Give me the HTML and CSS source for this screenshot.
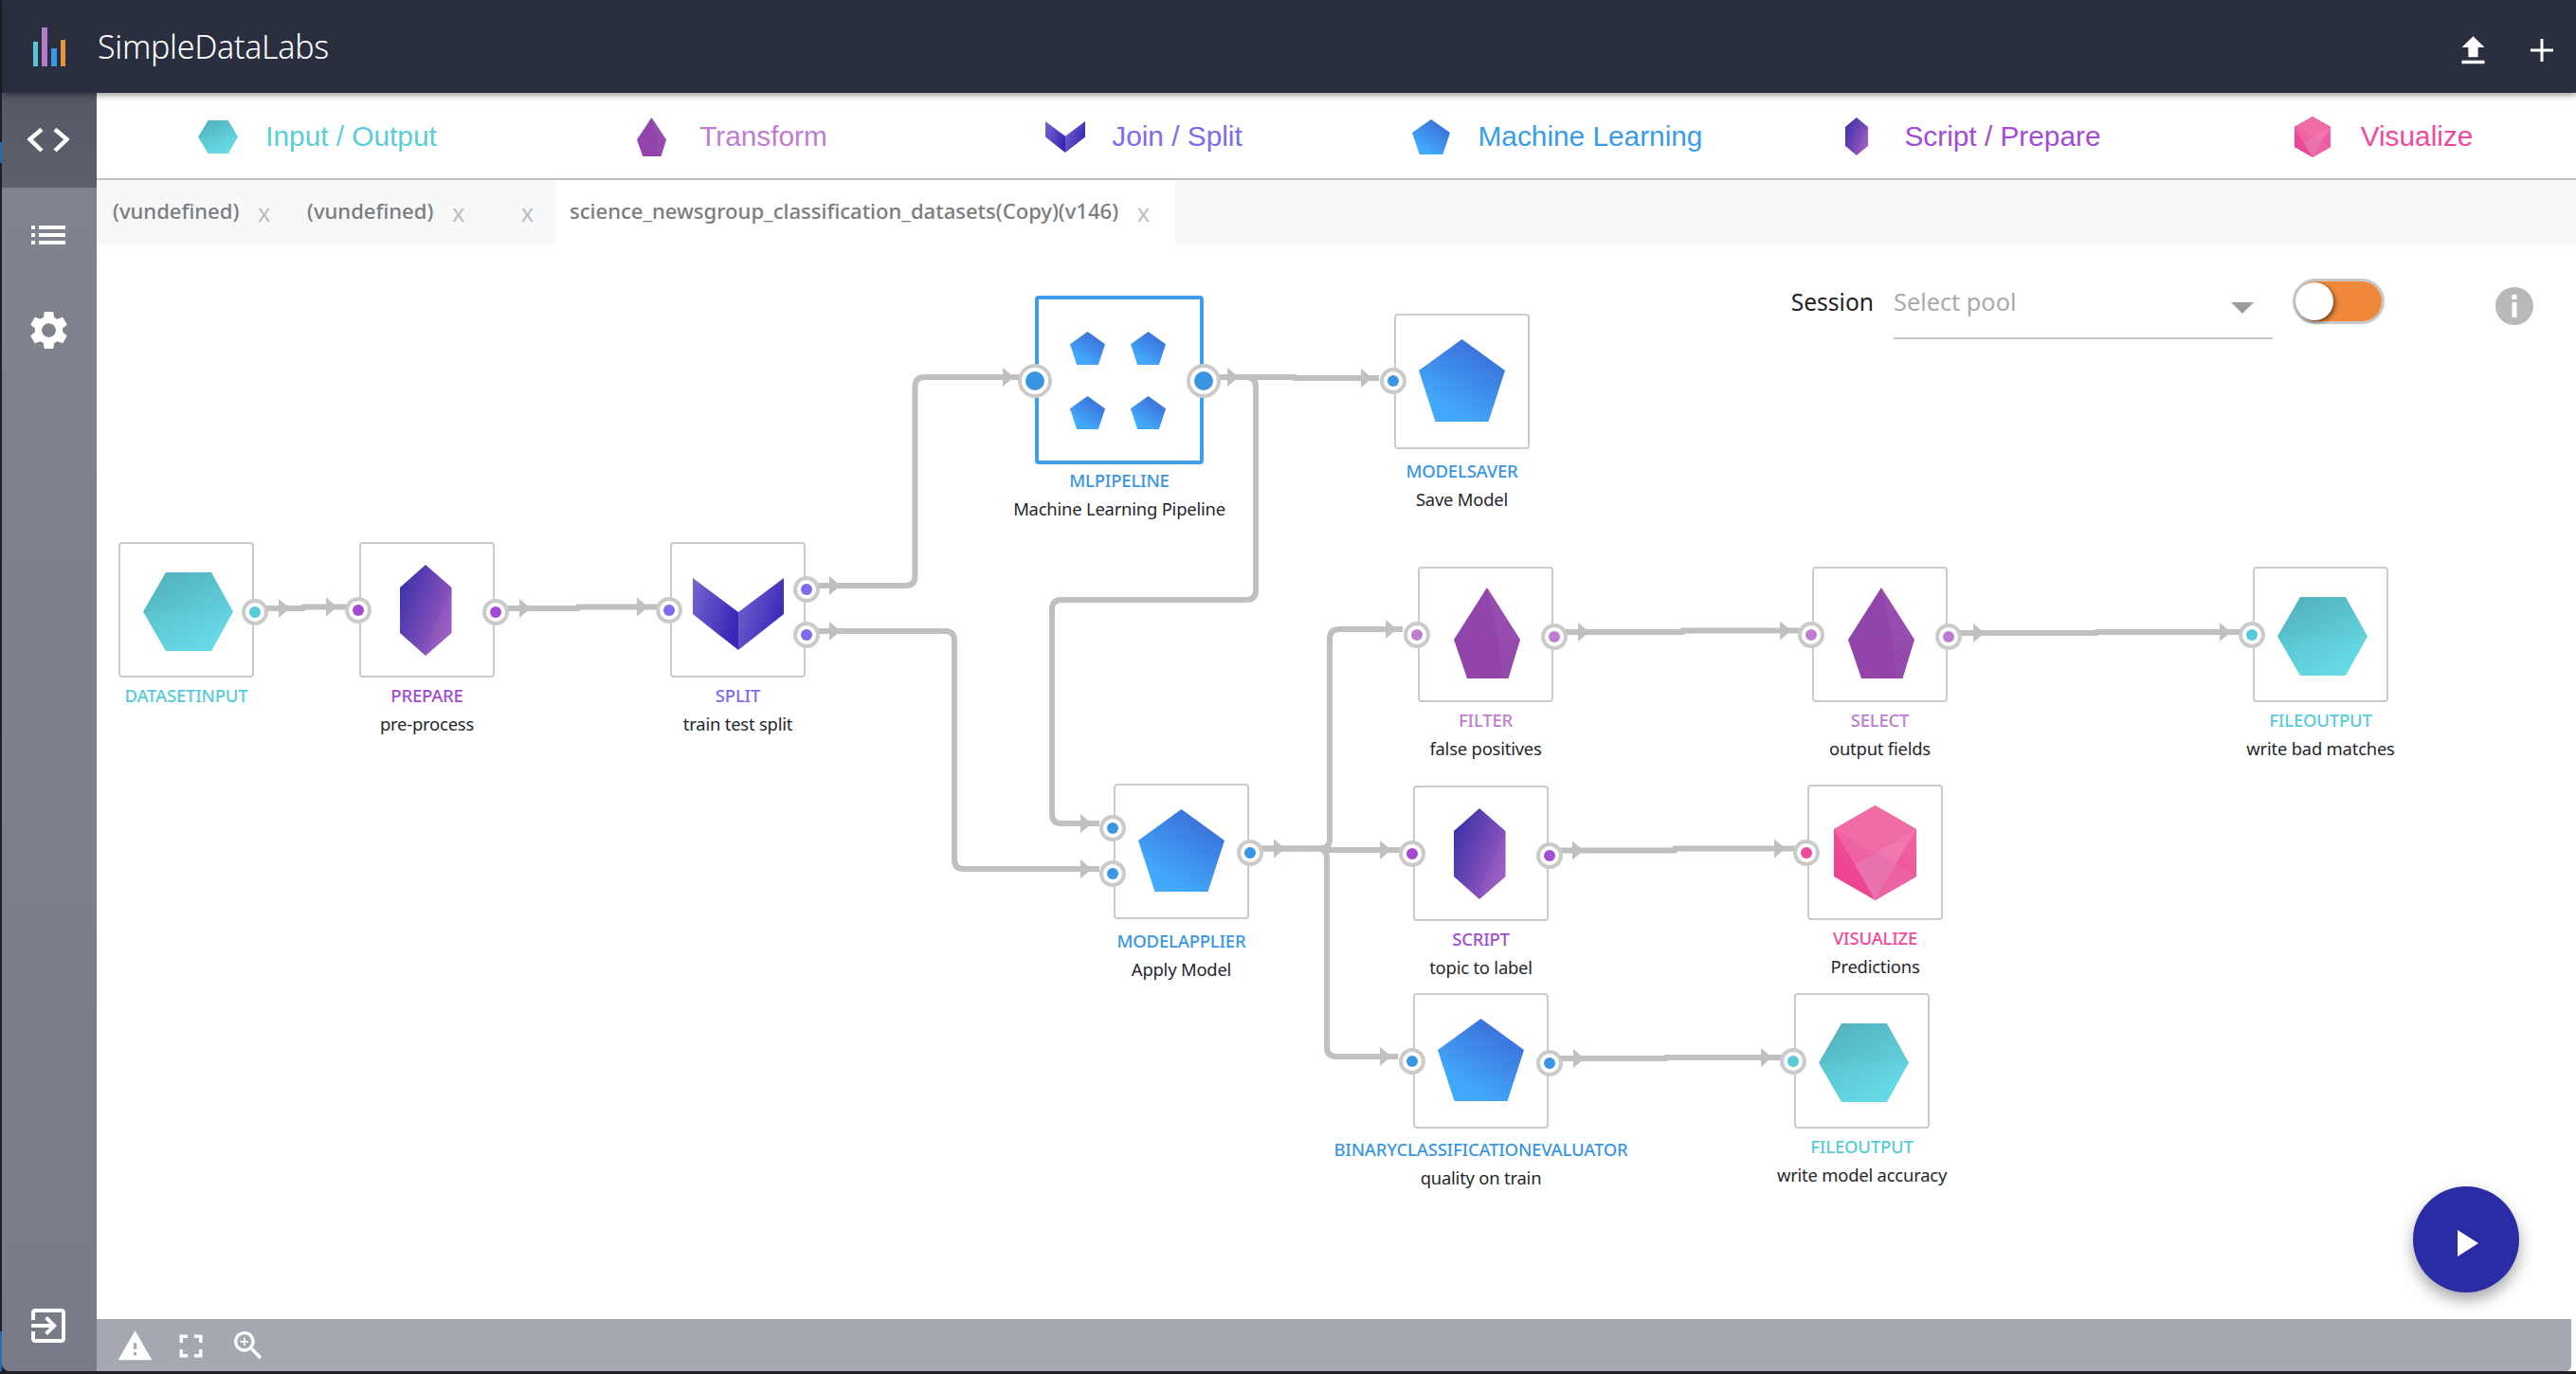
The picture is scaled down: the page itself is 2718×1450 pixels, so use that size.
FILE: index.html
```html
<!DOCTYPE html>
<html lang="en">
<head>
<meta charset="utf-8">
<title>SimpleDataLabs</title>
<link rel="stylesheet" href="styles.css">
</head>
<body>
<svg class="defs" aria-hidden="true">
  <defs>
    <linearGradient id="g-hex" x1="0.2" y1="0" x2="0.8" y2="1"><stop offset="0" stop-color="#53b2bc"/><stop offset="1" stop-color="#67dde9"/></linearGradient>
    <linearGradient id="g-crystal" x1="0" y1="0.15" x2="1" y2="0.85"><stop offset="0" stop-color="#3a2fa9"/><stop offset="1" stop-color="#a45fc2"/></linearGradient>
    <linearGradient id="g-kite" x1="0" y1="0" x2="1" y2="1"><stop offset="0" stop-color="#9145ab"/><stop offset="1" stop-color="#9243a9"/></linearGradient>
    <linearGradient id="g-wing" x1="0" y1="0" x2="1" y2="0.5"><stop offset="0" stop-color="#7865d2"/><stop offset="1" stop-color="#3829b6"/></linearGradient>
    <linearGradient id="g-pent" x1="0.85" y1="0.1" x2="0.35" y2="0.85"><stop offset="0" stop-color="#3a6cd6"/><stop offset="1" stop-color="#42a8fa"/></linearGradient>
    <linearGradient id="g-viz" x1="0" y1="1" x2="1" y2="0"><stop offset="0" stop-color="#ec3a8e"/><stop offset="1" stop-color="#f06ca6"/></linearGradient>
    <g id="s-hex">
      <polygon points="24,0 72,0 95,41.5 72,83 24,83 0,41.5" fill="url(#g-hex)"/>
      <polygon points="0,41.5 95,41.5 72,83 24,83" fill="#6fe6f0" opacity=".12"/>
    </g>
    <g id="s-crystal">
      <polygon points="27,0 54.5,24 54.5,72 27,96 0,72 0,24" fill="url(#g-crystal)"/>
      <polygon points="54.5,24 54.5,72 27,96 37,62" fill="#c585d8" opacity=".1"/>
    </g>
    <g id="s-kite">
      <polygon points="35,0 70,55 57.5,96 14,96 0,55" fill="url(#g-kite)"/>
      <polygon points="35,0 70,55 48,58" fill="#b478c6" opacity=".18"/>
      <polygon points="70,55 57.5,96 50,96 48,58" fill="#b478c6" opacity=".12"/>
    </g>
    <g id="s-vee">
      <polygon points="0,0 48,36 48,76 0,38" fill="url(#g-wing)"/>
      <polygon points="96,0 48,36 48,76 96,38" fill="url(#g-wing)"/>
    </g>
    <g id="s-pent">
      <polygon points="45.5,0 91,33 73.5,87 17.5,87 0,33" fill="url(#g-pent)"/>
    </g>
    <g id="s-viz">
      <polygon points="43.5,0 87,25 87,75 43.5,100 0,75 0,25" fill="url(#g-viz)"/>
      <polygon points="43.5,0 87,25 43.5,50 0,25" fill="#f06ca5"/>
      <polygon points="0,25 43.5,50 22,62" fill="#ef6ba7" opacity=".75"/>
      <polygon points="22,62 43.5,50 65,62 43.5,100" fill="#e872ad"/>
      <polygon points="87,25 43.5,50 65,62" fill="#f277ad"/>
      <polygon points="87,75 43.5,100 65,62" fill="#ec64a5"/>
    </g>
  </defs>
</svg>

<header class="topbar">
  <svg class="logo" viewBox="0 0 34 41"><rect x="0" y="15" width="5" height="26" fill="#56c7d3"/><rect x="9" y="0" width="6" height="41" fill="#b27ccb"/><rect x="19" y="22" width="6" height="19" fill="#3d97e4"/><rect x="29" y="13" width="5" height="28" fill="#e8943b"/></svg>
  <span class="brand">SimpleDataLabs</span>
  <span class="topbar-fill"></span>
  <svg class="ico-upload" viewBox="0 0 24 24"><path d="M9 16h6v-6h4l-7-7-7 7h4zm-4 2h14v2H5z"/></svg>
  <svg class="ico-plus" viewBox="0 0 24 24"><path d="M12 0v24M0 12h24"/></svg>
</header>

<div class="main">
  <aside class="sidebar">
    <div class="side-item side-active">
      <svg class="ico-code" viewBox="0 0 44 28"><path d="M15 2.500 2.500 13 15 25M29 2.500 41.500 13 29 25"/></svg>
    </div>
    <div class="side-item">
      <svg class="ico-list" viewBox="0 0 36 20"><path d="M0 0h4v4H0zM8 0h28v4H8zM0 8h4v4H0zM8 8h28v4H8zM0 16h4v4H0zM8 16h28v4H8z"/></svg>
    </div>
    <div class="side-item">
      <svg class="ico-gear" viewBox="0 0 24 24"><path d="M19.14 12.94c.04-.3.06-.61.06-.94 0-.32-.02-.64-.07-.94l2.03-1.58a.49.49 0 0 0 .12-.61l-1.92-3.32a.488.488 0 0 0-.59-.22l-2.39.96c-.5-.38-1.03-.7-1.62-.94l-.36-2.54a.484.484 0 0 0-.48-.41h-3.84c-.24 0-.43.17-.47.41l-.36 2.54c-.59.24-1.13.57-1.62.94l-2.39-.96c-.22-.08-.47 0-.59.22L2.740 8.870c-.12.21-.08.47.12.61l2.030 1.580c-.05.3-.09.63-.09.94s.02.64.07.94l-2.030 1.580a.49.49 0 0 0-.12.61l1.920 3.320c.12.22.37.29.59.22l2.390-.96c.5.38 1.030.7 1.620.94l.36 2.540c.05.24.24.41.48.41h3.840c.24 0 .44-.17.47-.41l.36-2.540c.59-.24 1.130-.56 1.620-.94l2.390.96c.22.08.47 0 .59-.22l1.920-3.320c.12-.22.07-.47-.12-.61l-2.010-1.580zM12 15.600c-1.980 0-3.600-1.620-3.600-3.600s1.620-3.600 3.600-3.600 3.600 1.620 3.600 3.600-1.620 3.600-3.600 3.600z"/></svg>
    </div>
    <div class="side-fill"></div>
    <div class="side-exit">
      <svg class="ico-exit" viewBox="0 0 24 24"><path d="M10.090 15.590 11.500 17l5-5-5-5-1.410 1.410L12.670 11H3v2h9.670l-2.580 2.590zM19 3H5c-1.110 0-2 .9-2 2v4h2V5h14v14H5v-4H3v4c0 1.100.89 2 2 2h14c1.100 0 2-.9 2-2V5c0-1.100-.9-2-2-2z"/></svg>
    </div>
  </aside>

  <div class="content">
    <nav class="palette">
      <div class="pal pal-io"><svg class="pi pi-hex" viewBox="0 0 95 83" preserveAspectRatio="none"><use href="#s-hex"/></svg><span>Input / Output</span></div>
      <div class="pal pal-tr"><svg class="pi pi-kite" viewBox="0 0 70 96" preserveAspectRatio="none"><use href="#s-kite"/></svg><span>Transform</span></div>
      <div class="pal pal-js"><svg class="pi pi-vee" viewBox="0 0 96 76" preserveAspectRatio="none"><use href="#s-vee"/></svg><span>Join / Split</span></div>
      <div class="pal pal-ml"><svg class="pi pi-pent" viewBox="0 0 91 87" preserveAspectRatio="none"><use href="#s-pent"/></svg><span>Machine Learning</span></div>
      <div class="pal pal-sp"><svg class="pi pi-crystal" viewBox="0 0 54.500 96" preserveAspectRatio="none"><use href="#s-crystal"/></svg><span>Script / Prepare</span></div>
      <div class="pal pal-vz"><svg class="pi pi-viz" viewBox="0 0 87 100" preserveAspectRatio="none"><use href="#s-viz"/></svg><span>Visualize</span></div>
    </nav>

    <div class="tabs">
      <div class="tab tab-a"><span class="tab-name">(vundefined)</span><span class="tab-x">x</span></div>
      <div class="tab tab-b"><span class="tab-name">(vundefined)</span><span class="tab-x">x</span></div>
      <div class="tab tab-c"><span class="tab-x">x</span></div>
      <div class="tab tab-active"><span class="tab-name">science_newsgroup_classification_datasets(Copy)(v146)</span><span class="tab-x">x</span></div>
    </div>

    <main class="canvas">
      <svg class="edges" viewBox="102 258 2611 1134">
        <g class="lines">
          <path d="M270 642H320V640.500H375"/>
          <path d="M524 642H610V640.500H695"/>
          <path d="M850 618H955.500Q965.500 618 965.500 608V408Q965.500 398 975.500 398H1075"/>
          <path d="M850 666H997Q1007 666 1007 676V907Q1007 917 1017 917H1160"/>
          <path d="M1270 398H1366V399H1455"/>
          <path d="M1270 398H1315Q1325 398 1325 408V623Q1325 633 1315 633H1120Q1110 633 1110 643V859Q1110 869 1120 869H1160"/>
          <path d="M1318 895.500H1393Q1403 895.500 1403 885.500V674Q1403 664 1413 664H1480"/>
          <path d="M1318 895.500H1400V897H1480"/>
          <path d="M1390 895.500Q1400 895.500 1400 905.500V1105Q1400 1115 1410 1115H1475"/>
          <path d="M1640 667H1775V665.500H1900"/>
          <path d="M2056 668H2212V667H2365"/>
          <path d="M1634 897.500H1767V895.500H1895"/>
          <path d="M1634 1117H1758V1116H1880"/>
        </g>
        <g class="arrows">
          <polygon points="294,632 306,642 294,652"/>
          <polygon points="344,630.500 356,640.500 344,650.500"/>
          <polygon points="548,632 560,642 548,652"/>
          <polygon points="672,630.500 684,640.500 672,650.500"/>
          <polygon points="875,608 887,618 875,628"/>
          <polygon points="1058,388 1070,398 1058,408"/>
          <polygon points="875,656 887,666 875,676"/>
          <polygon points="1140,907 1152,917 1140,927"/>
          <polygon points="1295,388 1307,398 1295,408"/>
          <polygon points="1436,389 1448,399 1436,409"/>
          <polygon points="1140,859 1152,869 1140,879"/>
          <polygon points="1344,885.500 1356,895.500 1344,905.500"/>
          <polygon points="1462,654 1474,664 1462,674"/>
          <polygon points="1456,887 1468,897 1456,907"/>
          <polygon points="1456,1105 1468,1115 1456,1125"/>
          <polygon points="1665,657 1677,667 1665,677"/>
          <polygon points="1878,655.500 1890,665.500 1878,675.500"/>
          <polygon points="2082,658 2094,668 2082,678"/>
          <polygon points="2342,657 2354,667 2342,677"/>
          <polygon points="1659,887.500 1671,897.500 1659,907.500"/>
          <polygon points="1872,885.500 1884,895.500 1872,905.500"/>
          <polygon points="1660,1107 1672,1117 1660,1127"/>
          <polygon points="1858,1106 1870,1116 1858,1126"/>
        </g>
      </svg>

      <div class="node k-io n-dataset">
        <div class="box"><svg class="shape sh-hex" viewBox="0 0 95 83"><use href="#s-hex"/></svg><span class="port p-out"></span></div>
        <div class="cap cap-21"><div class="cap-t">DATASETINPUT</div></div>
      </div>
      <div class="node k-sp n-prepare">
        <div class="box"><svg class="shape sh-crystal" viewBox="0 0 54.500 96"><use href="#s-crystal"/></svg><span class="port p-in"></span><span class="port p-out"></span></div>
        <div class="cap cap-21"><div class="cap-t">PREPARE</div><div class="cap-d">pre-process</div></div>
      </div>
      <div class="node k-js n-split">
        <div class="box"><svg class="shape sh-vee" viewBox="0 0 96 76"><use href="#s-vee"/></svg><span class="port p-in"></span><span class="port p-out p-split1"></span><span class="port p-out p-split2"></span></div>
        <div class="cap cap-21"><div class="cap-t">SPLIT</div><div class="cap-d">train test split</div></div>
      </div>
      <div class="node k-ml n-ml">
        <div class="box box-sel">
          <div class="mini-grid">
            <svg class="mini" viewBox="0 0 91 87" preserveAspectRatio="none"><use href="#s-pent"/></svg>
            <svg class="mini" viewBox="0 0 91 87" preserveAspectRatio="none"><use href="#s-pent"/></svg>
            <svg class="mini" viewBox="0 0 91 87" preserveAspectRatio="none"><use href="#s-pent"/></svg>
            <svg class="mini" viewBox="0 0 91 87" preserveAspectRatio="none"><use href="#s-pent"/></svg>
          </div>
          <span class="port port-lg p-lg-in"></span><span class="port port-lg p-lg-out"></span>
        </div>
        <div class="cap cap-17"><div class="cap-t">MLPIPELINE</div><div class="cap-d">Machine Learning Pipeline</div></div>
      </div>
      <div class="node k-ml n-saver">
        <div class="box"><svg class="shape sh-pent" viewBox="0 0 91 87"><use href="#s-pent"/></svg><span class="port p-in p-saver"></span></div>
        <div class="cap cap-25"><div class="cap-t">MODELSAVER</div><div class="cap-d">Save Model</div></div>
      </div>
      <div class="node k-ml n-applier">
        <div class="box"><svg class="shape sh-pent" viewBox="0 0 91 87"><use href="#s-pent"/></svg><span class="port p-in p-app1"></span><span class="port p-in p-app2"></span><span class="port p-out p-app3"></span></div>
        <div class="cap cap-25"><div class="cap-t">MODELAPPLIER</div><div class="cap-d">Apply Model</div></div>
      </div>
      <div class="node k-tr n-filter">
        <div class="box"><svg class="shape sh-kite" viewBox="0 0 70 96"><use href="#s-kite"/></svg><span class="port p-in"></span><span class="port p-out"></span></div>
        <div class="cap cap-21"><div class="cap-t">FILTER</div><div class="cap-d">false positives</div></div>
      </div>
      <div class="node k-tr n-select">
        <div class="box"><svg class="shape sh-kite" viewBox="0 0 70 96"><use href="#s-kite"/></svg><span class="port p-in"></span><span class="port p-out"></span></div>
        <div class="cap cap-21"><div class="cap-t">SELECT</div><div class="cap-d">output fields</div></div>
      </div>
      <div class="node k-io n-out1">
        <div class="box"><svg class="shape sh-hex" viewBox="0 0 95 83"><use href="#s-hex"/></svg><span class="port p-in"></span></div>
        <div class="cap cap-21"><div class="cap-t">FILEOUTPUT</div><div class="cap-d">write bad matches</div></div>
      </div>
      <div class="node k-sp n-script">
        <div class="box"><svg class="shape sh-crystal" viewBox="0 0 54.500 96"><use href="#s-crystal"/></svg><span class="port p-in"></span><span class="port p-out"></span></div>
        <div class="cap cap-21"><div class="cap-t">SCRIPT</div><div class="cap-d">topic to label</div></div>
      </div>
      <div class="node k-vz n-viz">
        <div class="box"><svg class="shape sh-viz" viewBox="0 0 87 100"><use href="#s-viz"/></svg><span class="port p-in"></span></div>
        <div class="cap cap-21"><div class="cap-t">VISUALIZE</div><div class="cap-d">Predictions</div></div>
      </div>
      <div class="node k-ml n-binary">
        <div class="box"><svg class="shape sh-pent" viewBox="0 0 91 87"><use href="#s-pent"/></svg><span class="port p-in"></span><span class="port p-out"></span></div>
        <div class="cap cap-24"><div class="cap-t">BINARYCLASSIFICATIONEVALUATOR</div><div class="cap-d">quality on train</div></div>
      </div>
      <div class="node k-io n-out2">
        <div class="box"><svg class="shape sh-hex" viewBox="0 0 95 83"><use href="#s-hex"/></svg><span class="port p-in"></span></div>
        <div class="cap cap-21"><div class="cap-t">FILEOUTPUT</div><div class="cap-d">write model accuracy</div></div>
      </div>

      <div class="session">
        <span class="session-label">Session</span>
        <div class="select"><span>Select pool</span><i class="caret"></i></div>
        <div class="toggle"><i class="knob"></i></div>
        <svg class="info" viewBox="0 0 40 40"><circle cx="20" cy="20" r="20" fill="#b9b9b9"/><rect x="17.500" y="8" width="5" height="5" fill="#fff"/><rect x="17.500" y="16" width="5" height="16" fill="#fff"/></svg>
      </div>

      <button class="run" type="button" aria-label="Run"><svg viewBox="0 0 22 28"><polygon points="0,0 22,14 0,28"/></svg></button>
    </main>

    <footer class="status">
      <svg class="st-warn" viewBox="0 0 24 24"><path fill-rule="evenodd" d="M1 21h22L12 2 1 21zm12-3h-2v-2h2v2zm0-4h-2v-4h2v4z"/></svg>
      <svg class="st-full" viewBox="0 0 24 24"><path d="M7 14H5v5h5v-2H7v-3zm-2-4h2V7h3V5H5v5zm12 7h-3v2h5v-5h-2v3zM14 5v2h3v3h2V5h-5z"/></svg>
      <svg class="st-zoom" viewBox="0 0 24 24"><path d="M15.500 14h-.79l-.28-.27C15.410 12.590 16 11.110 16 9.500 16 5.910 13.090 3 9.500 3S3 5.910 3 9.500 5.910 16 9.500 16c1.610 0 3.090-.59 4.230-1.570l.27.28v.79l5 4.990L20.490 19l-4.990-5zm-6 0C7.010 14 5 11.990 5 9.500S7.010 5 9.500 5 14 7.010 14 9.500 11.990 14 9.500 14z"/><path d="M12 10h-2v2H9v-2H7V9h2V7h1v2h2v1z"/></svg>
    </footer>
  </div>
</div>
<span class="edge-mark edge-mark-a"></span>
<span class="edge-mark edge-mark-b"></span>
</body>
</html>
```

FILE: styles.css
```css
* { box-sizing: border-box; }
html, body { margin: 0; padding: 0; }
body {
  width: 2718px;
  height: 1450px;
  overflow: hidden;
  background: #1e2025;
  font-family: "Noto Sans", "Open Sans", sans-serif;
  position: relative;
}
.defs { position: absolute; width: 0; height: 0; }

/* top bar */
.topbar {
  height: 98px;
  display: flex;
  align-items: center;
  background: #2a2f40;
  margin-left: 2px;
  padding-left: 33px;
  position: relative;
  z-index: 3;
  box-shadow: 0 2px 7px rgba(0, 0, 0, .45);
}
.logo { width: 34px; height: 41px; }
.brand { margin-left: 34px; color: #fff; font-size: 34px; font-weight: 300; letter-spacing: -.3px; }
.topbar-fill { flex: 1; }
.ico-upload { width: 41px; height: 41px; fill: #fff; margin-right: 40px; margin-top: 8px; }
.ico-plus { width: 24px; height: 24px; stroke: #fff; stroke-width: 3; fill: none; margin-right: 24px; margin-top: 8px; }

/* layout */
.main { display: flex; height: 1349px; }
.sidebar {
  width: 100px;
  flex: none;
  margin-left: 2px;
  display: flex;
  flex-direction: column;
  background: linear-gradient(180deg, #81848f 0%, #797c88 100%);
  border-bottom-left-radius: 8px;
}
.side-item { height: 100px; display: flex; align-items: center; justify-content: center; padding-right: 2px; }
.side-active { background: linear-gradient(180deg, #565965, #5c5f6c); }
.ico-code { width: 44px; height: 28px; stroke: #fff; stroke-width: 4.500; fill: none; }
.ico-list { width: 36px; height: 20px; fill: #fff; }
.ico-gear { width: 49px; height: 49px; fill: #fff; }
.side-fill { flex: 1; }
.side-exit { display: flex; justify-content: center; padding-bottom: 24px; padding-right: 2px; }
.ico-exit { width: 48px; height: 48px; fill: #fff; }

.content {
  flex: 1;
  min-width: 0;
  display: flex;
  flex-direction: column;
  background: #fff;
  position: relative;
}

/* palette */
.palette {
  height: 92px;
  flex: none;
  display: grid;
  grid-template-columns: repeat(6, 436px);
  padding: 2px 0 0 15px;
  align-items: center;
  overflow: hidden;
  border-bottom: 2px solid #c0c0c0;
  font-family: "Liberation Sans", Arial, sans-serif;
  font-size: 29.800px;
}
.pal { display: flex; align-items: center; justify-content: center; }
.pal-io { color: #5ccdd8; gap: 29px; }
.pal-tr { color: #bd7ed0; gap: 35px; padding-left: 3px; }
.pal-js { color: #7c6bed; gap: 28px; }
.pal-ml { color: #3a9be8; gap: 30px; }
.pal-sp { color: #a24dd1; gap: 38px; padding-left: 6px; }
.pal-vz { color: #ef4a9c; gap: 32px; }
.pi { display: block; flex: none; }
.pi-hex { width: 42px; height: 35px; }
.pi-kite { width: 31px; height: 41px; }
.pi-vee { width: 42px; height: 33px; }
.pi-pent { width: 40px; height: 37px; }
.pi-crystal { width: 24px; height: 40px; }
.pi-viz { width: 38px; height: 43px; }

/* tabs */
.tabs {
  height: 68px;
  flex: none;
  display: flex;
  background: #f7f8fa;
  font-size: 22.050px;
  color: #7c7c7c;
}
.tab { display: flex; align-items: center; height: 100%; }
.tab-a { padding-left: 17px; width: 222px; }
.tab-b { width: 197px; }
.tab-c { width: 65px; justify-content: flex-end; padding-right: 23px; }
.tab-active { width: 654px; background: #fff; padding-left: 15px; }
.tab-name { white-space: nowrap; font-weight: 500; padding-bottom: 5px; }
.tab-x { font-family: "Liberation Sans", Arial, sans-serif; font-size: 26px; color: #bdbdbd; margin-left: 20px; padding-top: 3px; }
.tab-c .tab-x { margin-left: 0; }

/* canvas */
.canvas { flex: 1; position: relative; background: #fff; overflow: hidden; }
.edges { position: absolute; left: 0; top: 0; width: 2611px; height: 1134px; }
.lines path { fill: none; stroke: #c0c0c0; stroke-width: 6px; stroke-linejoin: round; }
.arrows polygon { fill: #c0c0c0; }

.node {
  position: absolute;
  width: 143px;
  display: flex;
  flex-direction: column;
  align-items: center;
  --c: #3a9be8;
}
.k-io { --c: #57cbd7; }
.k-tr { --c: #bd7ed0; }
.k-js { --c: #7c6bed; }
.k-ml { --c: #3a96e2; }
.k-sp { --c: #a24dd1; }
.k-vz { --c: #ef4a9c; }

.n-dataset { left: 23px; top: 314px; }
.n-prepare { left: 277px; top: 314px; }
.n-split { left: 605px; top: 314px; }
.n-ml { left: 990px; top: 54px; width: 178px; }
.n-saver { left: 1369px; top: 73px; }
.n-applier { left: 1073px; top: 569px; }
.n-filter { left: 1394px; top: 340px; }
.n-select { left: 1810px; top: 340px; }
.n-out1 { left: 2275px; top: 340px; }
.n-script { left: 1389px; top: 571px; }
.n-viz { left: 1805px; top: 570px; }
.n-binary { left: 1389px; top: 790px; }
.n-out2 { left: 1791px; top: 790px; }

.box {
  position: relative;
  flex: none;
  width: 143px;
  height: 143px;
  background: #fff;
  border: 2px solid #cbcbcb;
  border-radius: 4px;
}
.box-sel { width: 178px; height: 178px; border: 4px solid #3f9eec; }
.shape { position: absolute; display: block; }
.sh-hex { width: 95px; height: 83px; left: 24px; top: 30px; }
.sh-crystal { width: 54.500px; height: 96px; left: 41px; top: 22px; }
.sh-vee { width: 96px; height: 76px; left: 22px; top: 36px; }
.sh-pent { width: 91px; height: 87px; left: 24px; top: 25px; }
.sh-kite { width: 70px; height: 96px; left: 36px; top: 20px; }
.sh-viz { width: 87px; height: 100px; left: 26px; top: 20px; }

.mini-grid {
  position: absolute;
  left: 33px;
  top: 34px;
  display: grid;
  grid-template-columns: 37px 37px;
  grid-auto-rows: 35px;
  column-gap: 27px;
  row-gap: 33px;
}
.mini { width: 37px; height: 35px; display: block; }

.port {
  position: absolute;
  width: 28px;
  height: 28px;
  border: 4.500px solid #cbcbcb;
  border-radius: 50%;
  background: #fff;
  display: flex;
  align-items: center;
  justify-content: center;
  z-index: 2;
}
.port::after { content: ""; width: 12px; height: 12px; border-radius: 50%; background: var(--c); }
.p-in { left: -17px; top: 56px; }
.p-out { right: -17px; top: 58px; }
.p-split1 { top: 34px; }
.p-split2 { top: 82px; }
.p-saver { top: 55px; }
.p-app1 { top: 31px; }
.p-app2 { top: 79px; }
.p-app3 { top: 57px; }
.port-lg { width: 36px; height: 36px; }
.port-lg::after { width: 20px; height: 20px; }
.p-lg-in { left: -22px; top: 68px; }
.p-lg-out { right: -22px; top: 68px; }

.cap { display: flex; flex-direction: column; align-items: center; white-space: nowrap; flex: none; }
.cap-t { color: var(--c); font-size: 18.500px; line-height: 24px; font-weight: 500; letter-spacing: -.2px; }
.cap-d { color: #25272c; font-size: 18.400px; line-height: 24px; margin-top: 6px; letter-spacing: -.2px; }
.cap-17 { margin-top: 5px; }
.cap-21 { margin-top: 7px; }
.cap-24 { margin-top: 10px; }
.cap-25 { margin-top: 11px; }

/* session controls */
.session {
  position: absolute;
  right: 45px;
  top: 36px;
  display: flex;
  align-items: center;
  height: 64px;
}
.session-label { color: #222; font-size: 24.600px; padding-bottom: 16px; }
.select {
  position: relative;
  width: 400px;
  height: 64px;
  margin-left: 21px;
  border-bottom: 2px solid #c4c4c4;
  color: #aaa;
  font-size: 25.300px;
  line-height: 48px;
}
.caret {
  position: absolute;
  right: 20px;
  top: 25px;
  border-left: 12px solid transparent;
  border-right: 12px solid transparent;
  border-top: 12px solid #9b9b9b;
}
.toggle {
  position: relative;
  width: 97px;
  height: 48px;
  margin-left: 21px;
  margin-bottom: 16px;
  border-radius: 24px;
  background: #f0883a;
  border: 3px solid #c8c8c8;
}
.knob {
  position: absolute;
  left: 0;
  top: 1px;
  width: 40px;
  height: 40px;
  border-radius: 50%;
  background: #fff;
  box-shadow: 2px 2px 4px rgba(0, 0, 0, .5);
}
.info { width: 40px; height: 40px; margin-left: 117px; margin-bottom: 7px; display: block; }

.run {
  position: absolute;
  right: 60px;
  bottom: 28px;
  width: 112px;
  height: 112px;
  padding: 0;
  border: 0;
  border-radius: 50%;
  background: #2a2ca5;
  box-shadow: 0 8px 16px rgba(0, 0, 0, .35);
  display: flex;
  align-items: center;
  justify-content: center;
}
.run svg { width: 22px; height: 28px; fill: #fff; margin-left: 4px; margin-top: 8px; }

/* status bar */
.status {
  height: 55px;
  flex: none;
  display: flex;
  align-items: center;
  background: #a5a8b0;
  margin-right: 5px;
  padding-left: 21px;
  border-bottom-right-radius: 6px;
}
.status svg { display: block; fill: #fff; flex: none; }
.st-warn { width: 39px; height: 39px; margin-top: 2px; }
.st-full { width: 41px; height: 41px; margin-left: 19px; margin-top: 1px; }
.st-zoom { width: 40px; height: 40px; margin-left: 20px; }

.edge-mark { position: absolute; left: 0; width: 2px; background: #1f6fb2; }
.edge-mark-a { top: 150px; height: 22px; }
.edge-mark-b { top: 1405px; height: 42px; }
```
